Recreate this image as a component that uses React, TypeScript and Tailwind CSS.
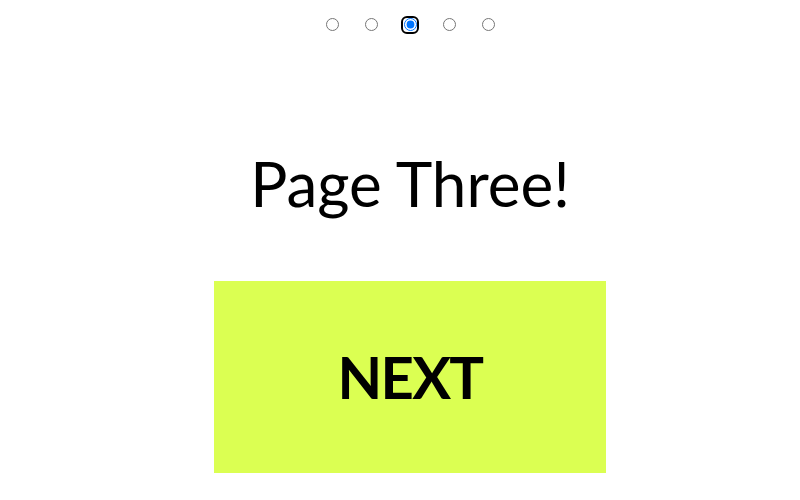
export default function App() {
  const pages = [0, 1, 2, 3, 4]
  const current = 2

  return (
    <div className="min-h-[500px] bg-white pl-5 flex flex-col items-center" style={{ fontFamily: "Lato, 'Open Sans', sans-serif" }}>
      {/* page dots */}
      <div className="mt-[18px] h-[13px] flex items-center gap-[26px]">
        {pages.map((p) =>
          p === current ? (
            <span key={p} className="-mx-[2.5px] flex rounded-[6px] border-2 border-black p-[0.5px]">
              <input type="radio" name="page" readOnly checked className="m-0 w-[13px] h-[13px]" />
            </span>
          ) : (
            <input key={p} type="radio" name="page" readOnly checked={false} className="m-0 w-[13px] h-[13px]" />
          )
        )}
      </div>

      <h1 className="mt-[121px] text-[62px] leading-none font-normal text-black">Page Three!</h1>

      <button className="mt-[67px] w-[392px] h-[192px] bg-[#dbff52] flex items-center justify-center text-[58px] leading-none font-bold tracking-[-0.03em] text-black">
        NEXT
      </button>
    </div>
  )
}
